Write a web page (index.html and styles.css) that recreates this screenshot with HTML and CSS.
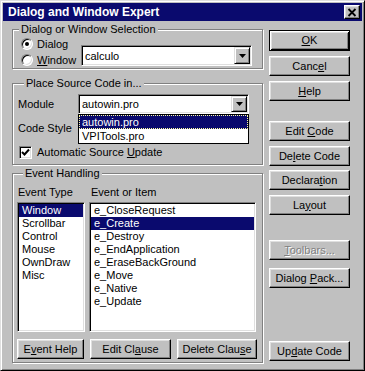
FILE: index.html
```html
<!DOCTYPE html>
<html lang="en">
<head>
  <meta charset="UTF-8">
  <title>Dialog and Window Expert</title>
  <link rel="stylesheet" href="styles.css">
</head>
<body>
  <div class="window">
    <div class="titlebar">
      <span class="title">Dialog and Window Expert</span>
      <span class="close">
        <svg width="10" height="9" viewBox="0 0 10 9"><path d="M1.5 1 L8.5 8 M8.5 1 L1.5 8" stroke="#000" stroke-width="1.8"/></svg>
      </span>
    </div>

    <div class="client">
      <div class="main">
        <!-- dialog / window choice -->
        <fieldset class="group">
          <legend>Dialog or Window Selection</legend>
          <div class="sel-row">
            <div class="radios">
              <label class="radio"><span class="dot checked"></span><span>Dialog</span></label>
              <label class="radio"><span class="dot"></span><span><u>W</u>indow</span></label>
            </div>
            <div class="combo sel-combo">
              <span class="combo-text">calculo</span>
              <span class="drop"><svg width="7" height="4" viewBox="0 0 7 4"><path d="M0 0 H7 L3.5 4 Z" fill="#000"/></svg></span>
            </div>
          </div>
        </fieldset>

        <!-- where the code goes -->
        <fieldset class="group place">
          <legend>Place Source Code in...</legend>
          <div class="field">
            <span class="field-label">Module</span>
            <div class="combo-wrap">
              <div class="combo">
                <span class="combo-text">autowin.pro</span>
                <span class="drop"><svg width="7" height="4" viewBox="0 0 7 4"><path d="M0 0 H7 L3.5 4 Z" fill="#000"/></svg></span>
              </div>
              <ul class="dropdown">
                <li class="selected">autowin.pro</li>
                <li>VPITools.pro</li>
              </ul>
            </div>
          </div>
          <div class="field style-row">
            <span class="field-label">Code Style</span>
          </div>
          <label class="check">
            <span class="box"><svg width="9" height="9" viewBox="0 0 9 9"><path d="M1 4 L3.5 6.5 L8 1.5" fill="none" stroke="#000" stroke-width="2"/></svg></span>
            <span>Automatic Source <u>U</u>pdate</span>
          </label>
        </fieldset>

        <!-- events -->
        <fieldset class="group events">
          <legend>Event Handling</legend>
          <div class="lists">
            <div class="list-col type-col">
              <div class="list-label">Event Type</div>
              <ul class="listbox">
                <li class="selected">Window</li>
                <li>Scrollbar</li>
                <li>Control</li>
                <li>Mouse</li>
                <li>OwnDraw</li>
                <li>Misc</li>
              </ul>
            </div>
            <div class="list-col item-col">
              <div class="list-label">Event or Item</div>
              <ul class="listbox">
                <li>e_CloseRequest</li>
                <li class="selected">e_Create</li>
                <li>e_Destroy</li>
                <li>e_EndApplication</li>
                <li>e_EraseBackGround</li>
                <li>e_Move</li>
                <li>e_Native</li>
                <li>e_Update</li>
              </ul>
            </div>
          </div>
          <div class="event-buttons">
            <button class="btn help-btn">E<u>v</u>ent Help</button>
            <button class="btn edit-btn">Edit Cl<u>a</u>use</button>
            <button class="btn del-btn">Delete Clau<u>s</u>e</button>
          </div>
        </fieldset>
      </div>

      <div class="side">
        <button class="btn default"><u>O</u>K</button>
        <button class="btn">Canc<u>e</u>l</button>
        <button class="btn"><u>H</u>elp</button>
        <button class="btn block-start">Edit <u>C</u>ode</button>
        <button class="btn">De<u>l</u>ete Code</button>
        <button class="btn tight">Declara<u>t</u>ion</button>
        <button class="btn">La<u>y</u>out</button>
        <button class="btn disabled toolbars"><u>T</u>oolbars...</button>
        <button class="btn pack">Dialog <u>P</u>ack...</button>
        <button class="btn update">Up<u>d</u>ate Code</button>
      </div>
    </div>
  </div>
</body>
</html>
```

FILE: styles.css
```css
* {
  box-sizing: border-box;
}

body {
  margin: 0;
  background-color: #c0c0c0;
  color: #000;
  font-family: "Liberation Sans", Arial, sans-serif;
  font-size: 11px;
}

u {
  text-decoration-thickness: 1px;
  text-underline-offset: 1px;
}

.window {
  width: 365px;
  height: 371px;
  padding: 2px;
  background-color: #c0c0c0;
  border: 1px solid;
  border-color: #dfdfdf #000 #000 #dfdfdf;
  box-shadow: inset 1px 1px #fff, inset -1px -1px #808080;
}

.titlebar {
  height: 18px;
  background-color: #0a0a6e;
  display: flex;
  align-items: center;
  justify-content: space-between;
  padding: 0 2px 0 5px;
}

.title {
  color: #fff;
  font-weight: bold;
  font-size: 12px;
}

.close {
  width: 16px;
  height: 14px;
  display: flex;
  align-items: center;
  justify-content: center;
  background-color: #c0c0c0;
  border: 1px solid;
  border-color: #fff #000 #000 #fff;
  box-shadow: inset -1px -1px #808080, inset 1px 1px #dfdfdf;
}

.client {
  display: flex;
  gap: 6px;
  padding: 1px 0 0 9px;
}

.main {
  width: 251px;
}

/* etched group boxes */
.group {
  margin: 0;
  padding: 0;
  min-width: 0;
  border: 1px solid #808080;
  box-shadow: inset 1px 1px #fff, 1px 1px #fff;
}

.group legend {
  margin-left: 6px;
  padding: 0 2px;
  line-height: 14px;
  background-color: #c0c0c0;
}

.place {
  margin-top: 7px;
  padding: 0 0 4px 5px;
}

.events {
  margin-top: 1px;
  padding: 0 0 3px 4px;
}

/* selection */
.sel-row {
  display: flex;
  padding-left: 8px;
}

.radios {
  width: 60px;
}

.radio {
  display: flex;
  align-items: center;
  gap: 4px;
  height: 16px;
}

.dot {
  width: 12px;
  height: 12px;
  border-radius: 50%;
  background-color: #fff;
  border: 1px solid;
  border-color: #808080 #fff #fff #808080;
  box-shadow: inset 1px 1px #000, inset -1px -1px #dfdfdf;
  display: flex;
  align-items: center;
  justify-content: center;
}

.dot.checked::after {
  content: "";
  width: 4px;
  height: 4px;
  border-radius: 50%;
  background-color: #000;
}

.combo {
  width: 171px;
  height: 20px;
  background-color: #fff;
  border: 1px solid;
  border-color: #808080 #fff #fff #808080;
  box-shadow: inset 1px 1px #000, inset -1px -1px #dfdfdf;
  display: flex;
  align-items: center;
  padding: 1px;
}

.sel-combo {
  height: 21px;
  align-self: flex-end;
  margin-bottom: 2px;
}

.combo-text {
  flex: 1;
  padding-left: 2px;
}

.drop {
  width: 16px;
  height: 100%;
  background-color: #c0c0c0;
  border: 1px solid;
  border-color: #dfdfdf #000 #000 #dfdfdf;
  box-shadow: inset 1px 1px #fff, inset -1px -1px #808080;
  display: flex;
  align-items: center;
  justify-content: center;
}

.field {
  display: flex;
  align-items: center;
  height: 20px;
  margin-top: 4px;
}

.field-label {
  width: 60px;
  white-space: nowrap;
}

.combo-wrap {
  position: relative;
}

.dropdown {
  position: absolute;
  top: 100%;
  left: 0;
  width: 171px;
  margin: 0;
  padding: 0;
  list-style: none;
  background-color: #fff;
  border: 1px solid #000;
  z-index: 2;
}

.dropdown li {
  height: 14px;
  line-height: 14px;
  padding-left: 3px;
}

.dropdown li.selected {
  background-color: #0a0a6e;
  color: #fff;
  outline: 1px dotted #ffffa0;
  outline-offset: -1px;
}

.check {
  display: flex;
  align-items: center;
  gap: 5px;
  height: 16px;
  margin-top: 6px;
  padding-left: 1px;
}

.box {
  width: 13px;
  height: 13px;
  background-color: #fff;
  border: 1px solid;
  border-color: #808080 #fff #fff #808080;
  box-shadow: inset 1px 1px #000, inset -1px -1px #dfdfdf;
  display: flex;
  align-items: center;
  justify-content: center;
}

/* lists */
.lists {
  display: flex;
  gap: 4px;
}

.type-col {
  width: 68px;
}

.item-col {
  width: 167px;
}

.list-label {
  line-height: 14px;
  margin-top: 5px;
  padding-left: 1px;
}

.item-col .list-label {
  padding-left: 2px;
}

.listbox {
  height: 130px;
  margin: 3px 0 0;
  padding: 1px;
  list-style: none;
  background-color: #fff;
  border: 1px solid;
  border-color: #808080 #fff #fff #808080;
  box-shadow: inset 1px 1px #000, inset -1px -1px #dfdfdf;
}

.listbox li {
  height: 13px;
  line-height: 13px;
  padding-left: 3px;
}

.listbox li.selected {
  background-color: #0a0a6e;
  color: #fff;
}

/* buttons */
.btn {
  display: block;
  height: 20px;
  padding: 0;
  background-color: #c0c0c0;
  color: #000;
  font: inherit;
  line-height: 17px;
  white-space: nowrap;
  text-align: center;
  border: 1px solid;
  border-color: #fff #000 #000 #fff;
  box-shadow: inset -1px -1px #808080, inset 1px 1px #dfdfdf;
}

.event-buttons {
  display: flex;
  gap: 6px;
  margin-top: 7px;
}

.help-btn {
  width: 67px;
}

.edit-btn {
  width: 81px;
}

.del-btn {
  width: 80px;
}

.side {
  width: 81px;
  padding-top: 8px;
  display: flex;
  flex-direction: column;
  gap: 5px;
}

.side .btn {
  width: 81px;
}

.btn.default {
  height: 21px;
  border-color: #000;
  box-shadow: inset 1px 1px #fff, inset -1px -1px #000, inset 2px 2px #dfdfdf, inset -2px -2px #808080;
}

.block-start {
  margin-top: 15px;
}

.tight {
  margin-top: -1px;
}

.toolbars {
  margin-top: 20px;
}

.pack {
  margin-top: 3px;
}

.update {
  margin-top: 48px;
}

.btn.disabled {
  color: #808080;
  text-shadow: 1px 1px #fff;
}
```
